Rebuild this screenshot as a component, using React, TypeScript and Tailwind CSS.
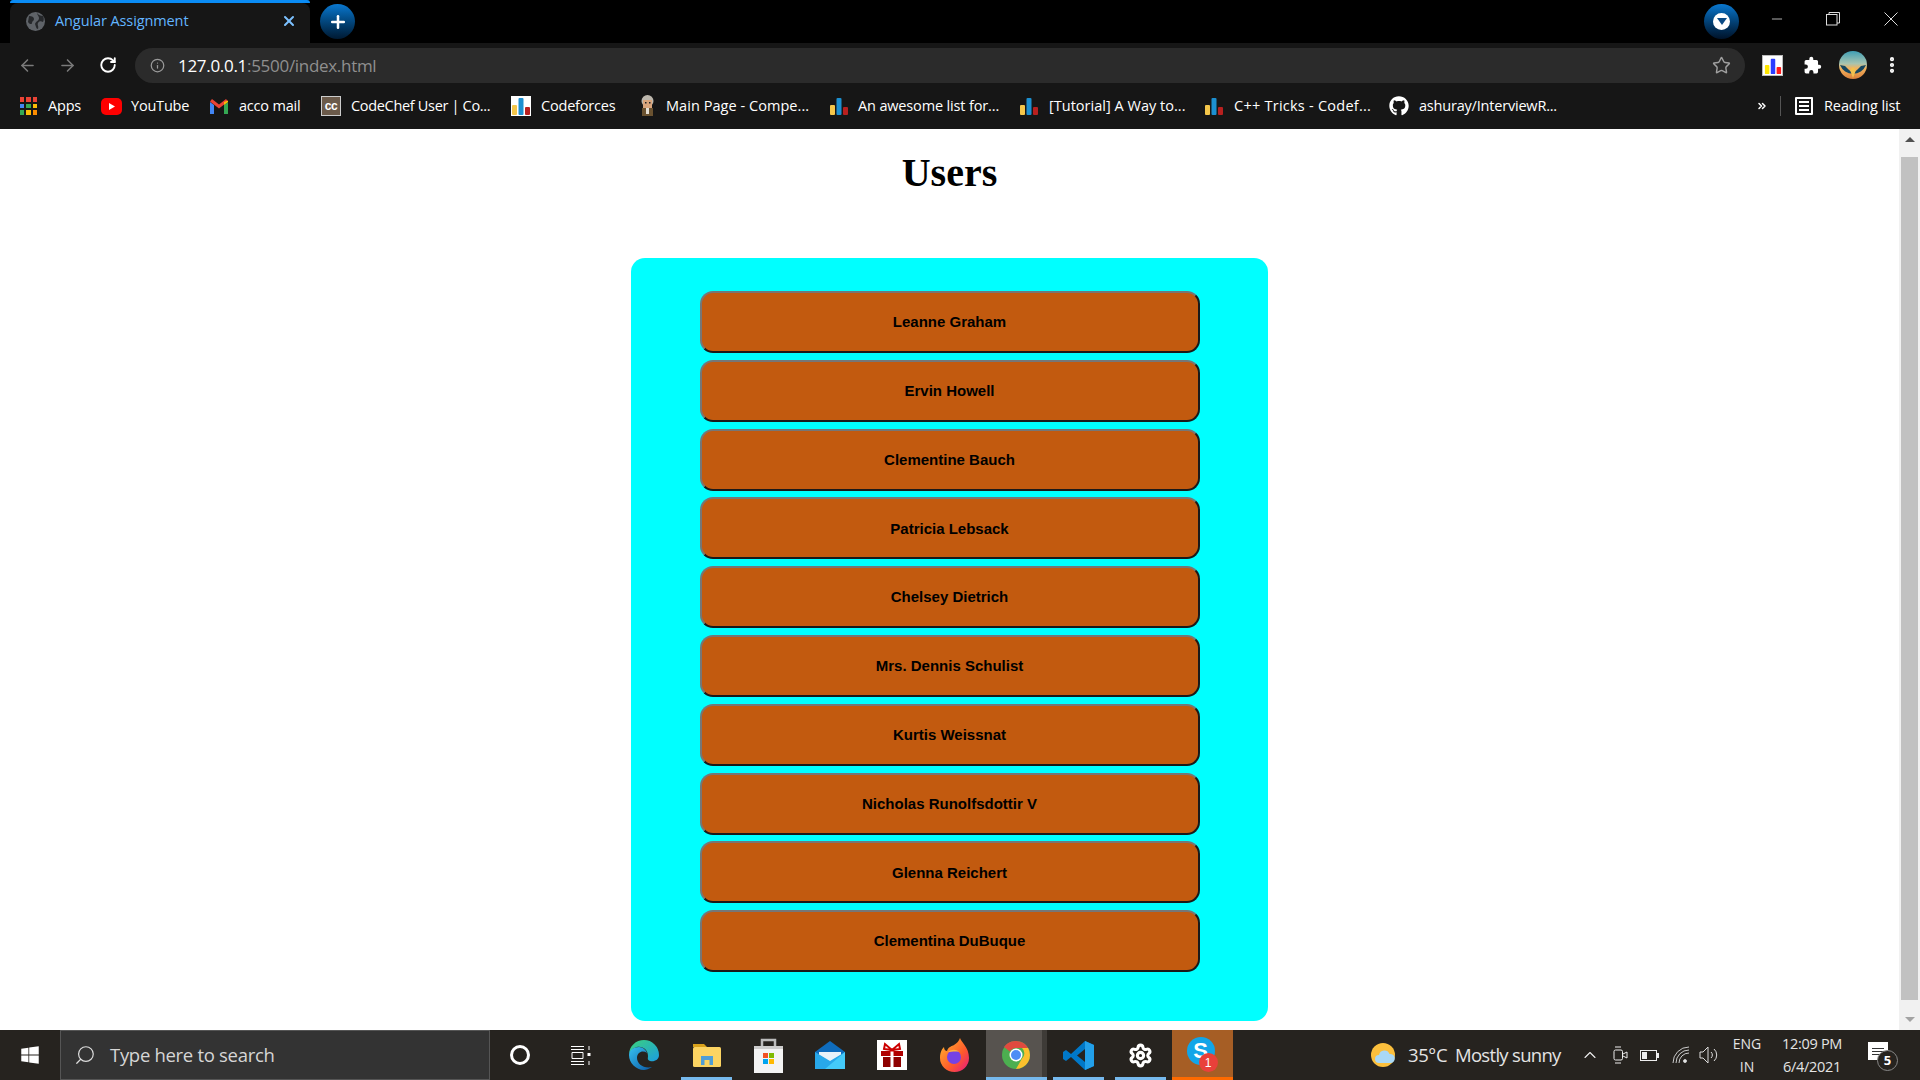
import React from "react";
import { ArrowLeft, ArrowRight, RotateCw, Info, Star, X, Plus, Minus, Search, ChevronUp, MoreVertical, ChevronsRight, Settings } from "lucide-react";
import { FaGithub, FaWindows } from "react-icons/fa";

const users = ["Leanne Graham","Ervin Howell","Clementine Bauch","Patricia Lebsack","Chelsey Dietrich","Mrs. Dennis Schulist","Kurtis Weissnat","Nicholas Runolfsdottir V","Glenna Reichert","Clementina DuBuque"];

const Bars = ({ s = 20, bright = false }: { s?: number; bright?: boolean }) => (
  <svg width={s} height={s} viewBox="0 0 20 20">
    <rect x="1" y="9" width="5" height="10" rx="1" fill={bright ? "#ffe600" : "#f4c64a"} />
    <rect x="7.5" y="2" width="5" height="17" rx="1" fill={bright ? "#2a3cff" : "#1c8fd0"} />
    <rect x="14" y="11" width="5" height="8" rx="1" fill={bright ? "#ff1a1a" : "#b8201f"} />
  </svg>
);

const AppsIcon = () => {
  const c = ["#ea4335","#ea4335","#ea4335","#4285f4","#34a853","#fbbc05","#34a853","#fbbc05","#fb8c00"];
  return (
    <div className="grid grid-cols-3 gap-[2px] w-[17px] h-[18px]">
      {c.map((x, i) => <div key={i} style={{ background: x }} />)}
    </div>
  );
};

const YT = () => (
  <svg width="21" height="17" viewBox="0 0 21 17"><rect width="21" height="17" rx="5" fill="#f00" /><path d="M8 5l6 3.500-6 3.500z" fill="#fff" /></svg>
);
const Gmail = () => (
  <svg width="18" height="15" viewBox="0 0 18 15"><path d="M0 3v12h4V6z" fill="#4285f4"/><path d="M18 3v12h-4V6z" fill="#34a853"/><path d="M0 2.500L9 9.500l9-7L16 0 9 5.500 2 0z" fill="#ea4335"/><path d="M14 3v3l4-3V1.500z" fill="#fbbc05"/></svg>
);
const CC = () => (
  <div className="w-[20px] h-[20px] bg-[#6b5a4a] border border-[#ccc] flex items-center justify-center text-[12px] font-bold text-white tracking-[-0.5px] [font-family:'Liberation_Sans']">cc</div>
);
const CF = () => (
  <div className="w-[20px] h-[20px] bg-white flex items-end justify-center"><Bars s={20} /></div>
);
const Monk = () => (
  <svg width="19" height="22" viewBox="0 0 19 22"><circle cx="9.500" cy="6" r="6" fill="#bdb7ad"/><rect x="5" y="5" width="9" height="8" fill="#d9a57c"/><rect x="7" y="7" width="1.500" height="1.500" fill="#222"/><rect x="11" y="7" width="1.500" height="1.500" fill="#222"/><rect x="4" y="13" width="11" height="8" fill="#6a5230"/><rect x="8" y="13" width="3" height="6" fill="#e5e0d5"/></svg>
);

const B = ({ ml, w, icon, text, g, t = -0.2 }: { ml: number; w: number; icon: React.ReactNode; text: string; g: number; t?: number }) => (
  <div className="flex items-center" style={{ marginLeft: ml }}>
    {icon}
    <span className="whitespace-nowrap text-white" style={{ marginLeft: g, width: w, letterSpacing: t }}>{text}</span>
  </div>
);

const Edge = () => (
  <svg width="32" height="32" viewBox="0 0 32 32">
    <defs><linearGradient id="e1" x1="0" y1="0" x2="1" y2="1"><stop offset="0" stopColor="#35c1f1"/><stop offset="1" stopColor="#0c59a4"/></linearGradient><linearGradient id="e2" x1="0" y1="0" x2="1" y2="1"><stop offset="0" stopColor="#3bd17b"/><stop offset="1" stopColor="#1b9de2"/></linearGradient></defs>
    <path d="M16 1a15 15 0 0 1 15 15c0 5-5 7-9 6-3-1-2-3-2-5 0-6-5-10-11-9C5 9 1 13 1 16 1 7 8 1 16 1z" fill="url(#e2)"/>
    <path d="M1 16c0-5 5-8 10-8 4 0 7 3 8 6-4-3-10-1-10 5 0 6 7 11 15 9-3 2-6 3-8 3C8 31 1 24 1 16z" fill="url(#e1)"/>
  </svg>
);
const Folder = () => (
  <svg width="28" height="26" viewBox="0 0 28 26"><path d="M0 2h11l3 3H0z" fill="#d9a21c"/><rect y="5" width="28" height="20" rx="1.500" fill="#fcd462"/><path d="M8 23v-9h12v9h-3.500v-5h-5v5z" fill="#4f9ed6"/></svg>
);
const Store = () => (
  <svg width="29" height="36" viewBox="0 0 29 36"><path d="M8 9V3h13v6" fill="none" stroke="#bbb" strokeWidth="2.500"/><path d="M0 9h29v27H0z" fill="#f3f3f3"/><rect y="9" width="29" height="3" fill="#ccc"/><rect x="9" y="16" width="5" height="5" fill="#f25022"/><rect x="15" y="16" width="5" height="5" fill="#7fba00"/><rect x="9" y="22" width="5" height="5" fill="#00a4ef"/><rect x="15" y="22" width="5" height="5" fill="#ffb900"/></svg>
);
const Mail = () => (
  <svg width="30" height="28" viewBox="0 0 30 28"><path d="M15 0l15 11v17H0V11z" fill="#0f6cbd"/><path d="M4 11h22v3l-11 7-11-7z" fill="#e9f2f9"/><path d="M0 11l15 9 15-9v17H0z" fill="#28a8ea"/><path d="M30 11v17H10z" fill="#50d9ff" opacity=".7"/></svg>
);
const Gift = () => (
  <svg width="30" height="30" viewBox="0 0 30 30"><rect width="30" height="30" fill="#fff"/><rect x="4" y="11" width="22" height="5" fill="#b00000"/><rect x="6" y="17" width="18" height="10" fill="#8e0000"/><rect x="13.500" y="11" width="3" height="16" fill="#fff"/><path d="M15 10L8 4l-1 5zM15 10l7-6 1 5z" fill="none" stroke="#c00" strokeWidth="2"/></svg>
);
const Firefox = () => (
  <svg width="29" height="34" viewBox="0 0 29 34"><defs><linearGradient id="ff" x1="0" y1="0" x2="1" y2="1"><stop offset="0" stopColor="#ffbd2e"/><stop offset=".6" stopColor="#ff5a2b"/><stop offset="1" stopColor="#e31587"/></linearGradient></defs><path d="M20 0c1 4 9 9 9 20a14.500 14 0 0 1-29 0C0 13 3 10 4 9c0 3 2 4 3 4 1-4 5-5 7-6 3-2 5-4 6-7z" fill="url(#ff)"/><circle cx="14" cy="19" r="7" fill="#7542e5"/><path d="M8 14c3-3 9-3 11 0-3-1-8 0-11 0z" fill="#ffb13b"/></svg>
);
const Chrome = () => (
  <svg className="ml-[3px]" width="28" height="28" viewBox="0 0 28 28"><circle cx="14" cy="14" r="14" fill="#4caf50"/><path d="M14 0a14 14 0 0 1 12.100 7H14a7 7 0 0 0-6.100 3.500L2 6A14 14 0 0 1 14 0z" fill="#e04a3f"/><path d="M26.100 7A14 14 0 0 1 14 28l6-10.500A7 7 0 0 0 20 7z" fill="#fbc02d"/><circle cx="14" cy="14" r="6.500" fill="#fff"/><circle cx="14" cy="14" r="5" fill="#4d8df5"/></svg>
);
const VS = () => (
  <svg width="31" height="31" viewBox="0 0 31 31"><path d="M22 1l9 4v21l-9 4L8 17l-5 4-3-2v-7l3-2 5 4z" fill="#0078c8"/><path d="M22 1l9 4v21l-9 4z" fill="#22a0ea"/><path d="M22 9l-8 6.500 8 6.500z" fill="#26231f"/></svg>
);

const Skype = () => (
  <div className="relative w-[32px] h-[36px]">
    <div className="absolute left-0 top-0 w-[28px] h-[28px] rounded-full bg-[#12a5e8] flex items-center justify-center text-white font-bold text-[22px] [font-family:'Liberation_Sans'] leading-none">S</div>
    <div className="absolute left-[12px] top-[16px] w-[19px] h-[19px] rounded-full bg-[#e9403a] flex items-center justify-center text-white text-[12px] [font-family:'Liberation_Sans'] leading-none">1</div>
  </div>
);

const Slot = ({ w, ml = 0, line = false, bg = "", children }: { w: number; ml?: number; line?: boolean; bg?: string; children: React.ReactNode }) => (
  <div className={`relative h-full flex items-center justify-center shrink-0 ${bg}`} style={{ width: w, marginLeft: ml }}>
    {children}
    {line && <div className="absolute bottom-0 left-0 right-0 h-[3px] bg-[#76b9ed]" />}
  </div>
);

export default function App() {
  return (
    <div className="w-[1920px] h-[1080px] overflow-hidden flex flex-col bg-white text-white [font-family:'Open_Sans','Noto_Sans',sans-serif]">
      {/* tab strip */}
      <div className="h-[43px] bg-black flex shrink-0">
        <div className="ml-[10px] w-[300px] flex flex-col">
          <div className="h-[3px] bg-[#0a8cf5] rounded-t-[3px]" />
          <div className="flex-1 bg-[#161616] rounded-t-[8px] flex items-center pb-[4px] text-[14.500px] text-[#62b5ff]">
            <svg className="ml-[16px]" width="19" height="19" viewBox="0 0 19 19"><circle cx="9.500" cy="9.500" r="9.500" fill="#5f6368"/><path d="M3 4c3 0 5 1 5 3s-2 2-2 4-3 1-4-1zM11 1c1 2 4 3 6 3 1 2 1 4 0 6-2-1-4-1-5 1s1 3 0 6c-2 0-2-3-3-5 1-3 4-3 4-6 0-2-2-3-2-5z" fill="#26282b"/></svg>
            <span className="ml-[10px] w-[135px] whitespace-nowrap tracking-[-0.1px]">Angular Assignment</span>
            <X className="ml-[91px] w-[16px] h-[16px] text-[#7cc1ff]" strokeWidth={3} />
          </div>
        </div>
        <div className="ml-[10px] mt-[4px] w-[35px] h-[35px] rounded-full bg-gradient-to-b from-[#0a78d0] to-[#001a33] flex items-center justify-center">
          <Plus className="w-[20px] h-[20px] text-white" strokeWidth={3} />
        </div>
        <div className="ml-[1349px] mt-[4px] w-[35px] h-[35px] rounded-full bg-gradient-to-b from-[#0a78d0] to-[#00132a] flex items-center justify-center">
          <div className="w-[17px] h-[17px] rounded-full bg-white flex items-center justify-center">
            <div className="w-0 h-0 border-l-[5px] border-r-[5px] border-t-[7px] border-l-transparent border-r-transparent border-t-[#0a4a85]" />
          </div>
        </div>
        <Minus className="ml-[30px] mt-[11px] w-[16px] h-[16px] text-[#ddd]" strokeWidth={1.200} />
        <svg className="ml-[41px] mt-[12px]" width="14" height="14" viewBox="0 0 14 14" fill="none" stroke="#ddd" strokeWidth="1"><rect x=".5" y="2.500" width="10.500" height="10.500"/><path d="M3 2.500V.5h10.500V11H11"/></svg>
        <svg className="ml-[44px] mt-[12px]" width="14" height="14" viewBox="0 0 14 14" fill="none" stroke="#ddd" strokeWidth="1"><path d="M.5.5l13 13M13.500.5l-13 13"/></svg>
      </div>
      {/* toolbar */}
      <div className="h-[43px] bg-[#161616] flex items-start shrink-0 pt-[5px]">
        <ArrowLeft className="ml-[18px] mt-[8px] w-[19px] h-[19px] text-[#7a7a7a]" />
        <ArrowRight className="ml-[21px] mt-[8px] w-[19px] h-[19px] text-[#7a7a7a]" />
        <RotateCw className="ml-[22px] mt-[8px] w-[18px] h-[18px] text-white" strokeWidth={2.500} />
        <div className="ml-[18px] w-[1610px] h-[35px] rounded-full bg-[#2b2b2b] flex items-center">
          <Info className="ml-[15px] w-[15px] h-[15px] text-[#9a9a9a]" />
          <span className="ml-[13px] text-[17px] text-white whitespace-nowrap tracking-[-0.3px]">127.0.0.1<span className="text-[#8f8f8f]">:5500/index.html</span></span>
          <div className="flex-1" />
          <Star className="mr-[14px] w-[19px] h-[19px] text-[#a0a0a0]" strokeWidth={1.800} />
        </div>
        <div className="ml-[17px] mt-[7px] w-[21px] h-[21px] bg-white border border-[#bbb] flex items-center justify-center"><Bars s={18} bright /></div>
        <svg className="ml-[20px] mt-[8px]" width="19" height="19" viewBox="0 0 24 24" fill="#fff"><path d="M20.500 11H19V7a2 2 0 0 0-2-2h-4V3.500a2.500 2.500 0 0 0-5 0V5H4a2 2 0 0 0-2 2v3.800h1.500a2.700 2.700 0 0 1 0 5.400H2V20a2 2 0 0 0 2 2h3.800v-1.500a2.700 2.700 0 0 1 5.400 0V22H17a2 2 0 0 0 2-2v-4h1.500a2.500 2.500 0 0 0 0-5z"/></svg>
        <svg className="ml-[17px] mt-[3px]" width="28" height="28" viewBox="0 0 28 28">
          <defs><linearGradient id="sky" x1="0" y1="0" x2="0" y2="1"><stop offset="0" stopColor="#3f9fb5"/><stop offset=".45" stopColor="#a8c4b0"/><stop offset=".62" stopColor="#f2b35e"/><stop offset="1" stopColor="#d97f3a"/></linearGradient></defs>
          <circle cx="14" cy="14" r="14" fill="url(#sky)"/>
          <path d="M1 14l5 1 4 4 4 3 4-3 4-4 5-1a14 14 0 0 1-26 0z" fill="#16465f"/>
          <path d="M11 19l3-3 3 3-3 8z" fill="#f2c14e"/>
        </svg>
        <MoreVertical className="ml-[15px] mt-[7px] w-[20px] h-[20px] text-white" strokeWidth={3} />
      </div>
      {/* bookmarks */}
      <div className="h-[43px] bg-[#161616] flex items-center pb-[3px] text-[14.500px] shrink-0">
        <B ml={20} g={11} w={34} icon={<AppsIcon />} text="Apps" />
        <B ml={19} g={9} w={58} icon={<YT />} text="YouTube" />
        <B ml={21} g={11} w={63} icon={<Gmail />} text="acco mail" />
        <B ml={19} g={10} w={141} t={-0.32} icon={<CC />} text="CodeChef User | Co..." />
        <B ml={19} g={10} w={76} icon={<CF />} text="Codeforces" />
        <B ml={21} g={9} w={143} t={0.05} icon={<Monk />} text="Main Page - Compe..." />
        <B ml={20} g={9} w={142} t={-0.15} icon={<Bars />} text="An awesome list for..." />
        <B ml={19} g={10} w={136} t={0.02} icon={<Bars />} text="[Tutorial] A Way to..." />
        <B ml={19} g={10} w={136} t={0.25} icon={<Bars />} text="C++ Tricks - Codef..." />
        <B ml={19} g={10} w={138} icon={<FaGithub className="w-[20px] h-[20px] text-white" />} text="ashuray/InterviewR..." />
        <ChevronsRight className="ml-[199px] w-[12px] h-[12px] text-white" strokeWidth={3} />
        <div className="ml-[12px] w-px h-[20px] bg-[#555]" />
        <div className="ml-[14px] w-[18px] h-[18px] border-2 border-white rounded-[1px] flex flex-col items-center justify-center gap-[2px]">
          <div className="w-[10px] h-[2px] bg-white" /><div className="w-[10px] h-[2px] bg-white" /><div className="w-[10px] h-[2px] bg-white" />
        </div>
        <span className="ml-[11px] whitespace-nowrap tracking-[-0.1px]">Reading list</span>
      </div>
      {/* page */}
      <div className="h-[901px] flex shrink-0 [font-family:'Liberation_Sans',Arial,sans-serif] text-black">
        <main className="flex-1 flex flex-col items-center">
          <h1 className="mt-[21px] mb-[62px] text-[40px] leading-[46px] font-bold [font-family:'Liberation_Serif',serif]">Users</h1>
          <div className="w-[637px] h-[763px] rounded-[14px] bg-[#00ffff] pt-[33px] flex flex-col items-center gap-[6.800px]">
            {users.map((u) => (
              <button key={u} className="w-[500px] h-[62px] shrink-0 rounded-[13px] bg-[#c25a0f] pt-px border-2 border-t-[#767676] border-l-[#767676] border-r-[#1a1a1a] border-b-[#1a1a1a] text-[15px] font-bold text-black">{u}</button>
            ))}
          </div>
        </main>
        <div className="w-[21px] bg-[#f1f1f1] flex flex-col items-center">
          <div className="h-[21px] flex items-center justify-center shrink-0"><div className="w-0 h-0 border-l-[5px] border-r-[5px] border-b-[5px] border-l-transparent border-r-transparent border-b-[#505050]" /></div>
          <div className="w-[17px] flex-1 bg-[#c1c1c1] mt-[7px] mb-[9px]" />
          <div className="h-[21px] flex items-center justify-center shrink-0"><div className="w-0 h-0 border-l-[5px] border-r-[5px] border-t-[5px] border-l-transparent border-r-transparent border-t-[#a3a3a3]" /></div>
        </div>
      </div>
      {/* taskbar */}
      <div className="h-[50px] bg-[#26231f] flex items-center shrink-0">
        <FaWindows className="ml-[20px] w-[20px] h-[20px] text-white" />
        <div className="ml-[20px] w-[430px] h-full bg-[#333333] border border-[#555] flex items-center text-[18.500px] text-[#d6d6d6]">
          <Search className="ml-[13px] w-[22px] h-[22px] -scale-x-100 text-[#ddd]" strokeWidth={1.300} />
          <span className="ml-[14px] tracking-[-0.3px] whitespace-nowrap">Type here to search</span>
        </div>
        <Slot w={60}><div className="w-[20px] h-[20px] rounded-full border-[3px] border-white" /></Slot>
        <Slot w={60}>
          <svg width="21" height="21" viewBox="0 0 21 21" fill="none" stroke="#fff"><path d="M1 1.500h13M1 4.500h13M1 16.500h13M1 19.500h13M2 7.500h11v6H2zM19 1v4M19 16v4"/><rect x="17.500" y="8" width="3" height="3" fill="#fff" stroke="none"/></svg>
        </Slot>
        <Slot w={62} ml={3}><Edge /></Slot>
        <Slot w={51} ml={6} line><Folder /></Slot>
        <Slot w={62} ml={5}><Store /></Slot>
        <Slot w={62}><Mail /></Slot>
        <Slot w={62}><Gift /></Slot>
        <Slot w={62}><Firefox /></Slot>
        <Slot w={56} ml={1} line bg="bg-[#57534f]"><Chrome /></Slot>
        <div className="w-[5px] h-full bg-[#3e3b37] relative shrink-0"><div className="absolute bottom-0 left-0 right-0 h-[3px] bg-[#76b9ed]" /></div>
        <Slot w={51} ml={6} line><VS /></Slot>
        <Slot w={51} ml={11} line><Settings className="w-[25px] h-[25px] text-white" strokeWidth={3} /></Slot>
        <div className="relative ml-[6px] w-[61px] h-full bg-[#a65e25] flex items-center justify-center shrink-0">
          <Skype />
          <div className="absolute bottom-0 left-0 right-0 h-[3px] bg-[#ff6a00]" />
        </div>
        <svg className="ml-[138px]" width="25" height="24" viewBox="0 0 25 24"><circle cx="12" cy="12" r="12" fill="#fbbf3c"/><path d="M8 20a4 4 0 0 1 0-8 5.500 5.500 0 0 1 10.500-1 4.500 4.500 0 0 1 1.500 9z" fill="#a9d8f5"/></svg>
        <span className="ml-[12px] w-[37px] text-[18.500px] text-[#e4e4e4] whitespace-nowrap tracking-[-0.4px]">35°C</span>
        <span className="ml-[10px] w-[107px] text-[18.500px] text-[#e4e4e4] whitespace-nowrap tracking-[-0.7px]">Mostly sunny</span>
        <ChevronUp className="ml-[18px] w-[20px] h-[20px] text-[#eee]" strokeWidth={1.300} />
        <svg className="ml-[13px]" width="15" height="20" viewBox="0 0 15 20" fill="none" stroke="#eee"><rect x="1" y="5" width="8.500" height="10" rx="1.500"/><path d="M10 9l4-2v6l-4-2M2 2h6M2 18h6"/></svg>
        <svg className="ml-[12px]" width="19" height="11" viewBox="0 0 19 11" fill="none" stroke="#eee"><rect x=".5" y=".5" width="16" height="10"/><rect x="2" y="2" width="5" height="7" fill="#eee" stroke="none"/><rect x="17" y="3" width="2" height="5" fill="#eee" stroke="none"/></svg>
        <svg className="ml-[13px]" width="18" height="18" viewBox="0 0 18 18" fill="none" stroke="#ccc"><path d="M1 17A16 16 0 0 1 17 1M4 17A13 13 0 0 1 17 4M7 17A10 10 0 0 1 17 7" /><circle cx="13" cy="15" r="1.500" fill="#eee"/></svg>
        <svg className="ml-[9px]" width="20" height="20" viewBox="0 0 20 20" fill="none" stroke="#ddd"><path d="M1 7h3l5-5v16l-5-5H1zM12 7a4 4 0 0 1 0 6M15 4a8 8 0 0 1 0 12"/></svg>
        <div className="ml-[11px] w-[34px] flex flex-col items-center text-[14px] leading-[23px] text-[#e4e4e4]"><span>ENG</span><span>IN</span></div>
        <div className="ml-[13px] w-[70px] flex flex-col items-center text-[14.500px] leading-[23px] text-[#e4e4e4] whitespace-nowrap tracking-[-0.3px]"><span>12:09 PM</span><span>6/4/2021</span></div>
        <div className="relative ml-[21px] w-[27px] h-[30px]">
          <div className="absolute left-0 top-[2px] w-[20px] h-[18px] bg-white flex flex-col items-center justify-center gap-[2px]"><div className="w-[12px] h-px bg-[#333]" /><div className="w-[12px] h-px bg-[#333]" /><div className="w-[12px] h-px bg-[#333]" /></div>
          <div className="absolute left-[9px] top-[10px] w-[21px] h-[21px] rounded-full bg-[#26231f] border border-[#888] flex items-center justify-center text-[13px] font-bold text-white">5</div>
        </div>
      </div>
    </div>
  );
}
